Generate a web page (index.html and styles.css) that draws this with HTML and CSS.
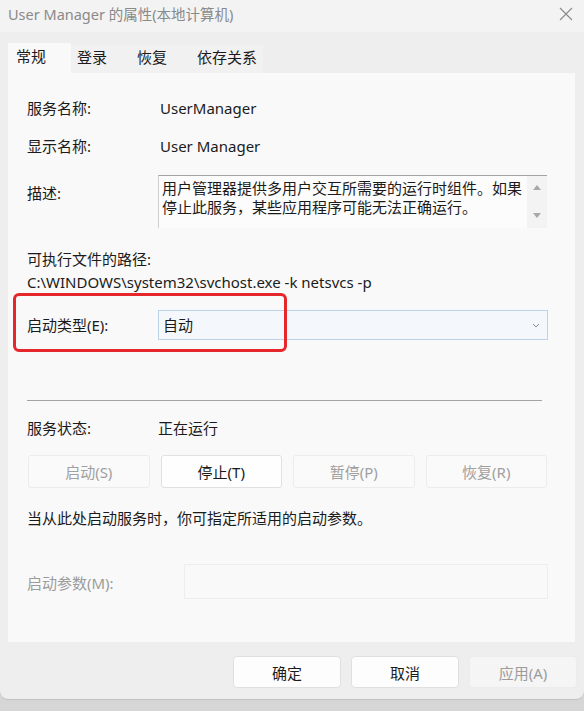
FILE: index.html
```html
<!DOCTYPE html>
<html lang="zh-CN">
<head>
<meta charset="utf-8">
<title>User Manager 的属性(本地计算机)</title>
<link rel="stylesheet" href="styles.css">
</head>
<body>
<div class="window">
  <div class="titlebar">
    <span class="title">User Manager 的属性(本地计算机)</span>
    <svg class="close" width="14" height="14" viewBox="0 0 14 14"><path d="M1 1 L13 13 M13 1 L1 13" stroke="#8a8a8a" stroke-width="1.1" fill="none"/></svg>
  </div>
  <div class="tabs">
    <div class="tab active">常规</div>
    <div class="tab">登录</div>
    <div class="tab">恢复</div>
    <div class="tab">依存关系</div>
  </div>
  <div class="panel">
    <div class="row r-name"><span class="label">服务名称:</span><span class="value">UserManager</span></div>
    <div class="row r-display"><span class="label">显示名称:</span><span class="value">User Manager</span></div>
    <div class="row r-desc">
      <span class="label">描述:</span>
      <div class="descbox">
        <div class="desctext">用户管理器提供多用户交互所需要的运行时组件。如果停止此服务，某些应用程序可能无法正确运行。</div>
        <div class="scrollbar">
          <svg width="8" height="5" viewBox="0 0 8 5"><path d="M4 0 L8 5 L0 5 Z" fill="#a8a8a8"/></svg>
          <svg width="8" height="5" viewBox="0 0 8 5"><path d="M0 0 L8 0 L4 5 Z" fill="#a8a8a8"/></svg>
        </div>
      </div>
    </div>
    <div class="path-label">可执行文件的路径:</div>
    <div class="path">C:\WINDOWS\system32\svchost.exe -k netsvcs -p</div>
    <div class="row r-type">
      <span class="label">启动类型(E):</span>
      <div class="combo"><span>自动</span><svg width="8" height="5" viewBox="0 0 8 5"><path d="M1 1 L4 4 L7 1" stroke="#8a8a8a" stroke-width="1" fill="none"/></svg></div>
    </div>
    <div class="separator"></div>
    <div class="row r-status"><span class="label">服务状态:</span><span class="value0">正在运行</span></div>
    <div class="btnrow">
      <div class="btn disabled">启动(S)</div>
      <div class="btn">停止(T)</div>
      <div class="btn disabled">暂停(P)</div>
      <div class="btn disabled">恢复(R)</div>
    </div>
    <div class="hint">当从此处启动服务时，你可指定所适用的启动参数。</div>
    <div class="row r-param"><span class="label gray">启动参数(M):</span><div class="paraminput"></div></div>
    <div class="highlight"></div>
  </div>
  <div class="footer">
    <div class="fbtn">确定</div>
    <div class="fbtn">取消</div>
    <div class="fbtn disabled">应用(A)</div>
  </div>
</div>
</body>
</html>
```
FILE: styles.css
```css
html, body {
  margin: 0;
  padding: 0;
}
body {
  background: #d6d6d6;
  font-family: "Noto Sans", "Noto Sans CJK SC", sans-serif;
  font-size: 15px;
  color: #1b1b1b;
  width: 584px;
  height: 711px;
  overflow: hidden;
}
.window {
  height: 699px;
  background: #eeeeee;
  border-radius: 0 0 8px 8px;
  box-shadow: 0 1px 0 #c2c2c2;
  display: flex;
  flex-direction: column;
}
.titlebar {
  height: 32px;
  flex: none;
  background: #f3f3f3;
  display: flex;
  align-items: center;
  justify-content: space-between;
  padding: 0 11px 0 8px;
}
.title {
  color: #8a8a8a;
  font-size: 14.5px;
  line-height: 20px;
  margin-top: -5px;
}
.close {
  margin-top: -4px;
}
.tabs {
  height: 41px;
  flex: none;
  display: flex;
  align-items: flex-end;
  padding-left: 8px;
}
.tab {
  min-width: 60px;
  box-sizing: border-box;
  height: 28px;
  padding: 0 6px;
  line-height: 25px;
  background: #f1f1f1;
  white-space: nowrap;
}
.tab.active {
  min-width: 63px;
  height: 30px;
  padding-left: 8px;
  line-height: 26px;
  background: #f9f9f9;
}
.panel {
  position: relative;
  margin: 0 9px 0 8px;
  height: 569px;
  flex: none;
  box-sizing: border-box;
  background: #f9f9f9;
  padding: 25px 27px 0 19px;
}
.row {
  display: grid;
  grid-template-columns: 131px 1fr;
  line-height: 20px;
}
.value {
  padding-left: 2px;
}
.r-display {
  margin-top: 18px;
}
.r-desc {
  margin-top: 19px;
  align-items: start;
}
.r-desc .label {
  padding-top: 8px;
}
.descbox {
  height: 53px;
  box-sizing: border-box;
  border-top: 1px solid #a3a3a3;
  border-left: 1px solid #cfcfcf;
  background: #fcfcfc;
  display: flex;
  margin-right: 1px;
}
.desctext {
  flex: 1;
  padding: 3px 4px 0 3px;
  line-height: 19px;
}
.scrollbar {
  width: 20px;
  flex: none;
  background: #f3f3f3;
  display: flex;
  flex-direction: column;
  align-items: center;
  justify-content: space-between;
  padding: 9px 0 10px;
  box-sizing: border-box;
}
.path-label {
  margin-top: 21px;
  line-height: 20px;
}
.path {
  margin-top: 3px;
  line-height: 20px;
}
.r-type {
  margin-top: 18px;
  align-items: center;
}
.combo {
  height: 30px;
  box-sizing: border-box;
  border: 1px solid #bcd2e9;
  background: #f4f8fc;
  display: flex;
  align-items: center;
  justify-content: space-between;
  padding: 0 7px 0 4px;
}
.separator {
  margin-top: 60px;
  height: 1px;
  background: #a3a3a3;
  margin-right: 6px;
}
.r-status {
  margin-top: 17px;
}
.btnrow {
  margin-top: 17px;
  display: grid;
  grid-template-columns: repeat(4, 1fr);
  gap: 11px;
  padding-left: 1px;
  margin-right: 1px;
}
.btn {
  height: 33px;
  box-sizing: border-box;
  border: 1px solid #e1e1e1;
  border-radius: 3px;
  background: #fefefe;
  display: flex;
  align-items: center;
  justify-content: center;
}
.btn.disabled {
  border-color: #ececec;
  background: #fafafa;
  color: #a0a0a0;
}
.hint {
  margin-top: 20px;
  line-height: 20px;
}
.r-param {
  margin-top: 36px;
  grid-template-columns: 157px 1fr;
  align-items: center;
}
.label.gray {
  color: #9c9c9c;
  padding-top: 3px;
}
.paraminput {
  height: 35px;
  box-sizing: border-box;
  border: 1px solid #eeeeee;
  background: #f9f9f9;
}
.highlight {
  position: absolute;
  left: 5px;
  top: 220px;
  width: 274px;
  height: 59px;
  box-sizing: border-box;
  border: 3px solid #e5262b;
  border-radius: 6px;
}
.footer {
  margin-top: 14px;
  display: flex;
  justify-content: flex-end;
  gap: 10px;
  padding-right: 7px;
}
.fbtn {
  width: 108px;
  height: 32px;
  box-sizing: border-box;
  border: 1px solid #e0e0e0;
  border-radius: 4px;
  background: #fdfdfd;
  display: flex;
  align-items: center;
  justify-content: center;
}
.fbtn.disabled {
  border-color: #ececec;
  background: #f5f5f5;
  color: #9c9c9c;
}
```
